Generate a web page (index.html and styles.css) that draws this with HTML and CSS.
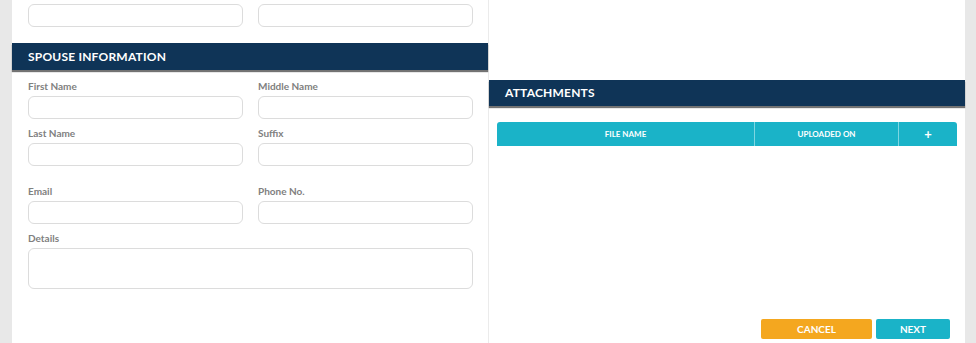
FILE: index.html
```html
<!DOCTYPE html>
<html lang="en">
<head>
    <meta charset="UTF-8">
    <meta name="viewport" content="width=device-width, initial-scale=1.0">
    <title>Spouse Information</title>
    <link rel="stylesheet" href="styles.css">
</head>
<body>
    <div class="page">
        <div class="left-col">
            <div class="form-row top-row">
                <div class="field"><input type="text"></div>
                <div class="field"><input type="text"></div>
            </div>

            <div class="section-header">Spouse Information</div>

            <div class="form-row row-1">
                <div class="field">
                    <label>First Name</label>
                    <input type="text">
                </div>
                <div class="field">
                    <label>Middle Name</label>
                    <input type="text">
                </div>
            </div>

            <div class="form-row row-2">
                <div class="field">
                    <label>Last Name</label>
                    <input type="text">
                </div>
                <div class="field">
                    <label>Suffix</label>
                    <input type="text">
                </div>
            </div>

            <div class="form-row row-3">
                <div class="field">
                    <label>Email</label>
                    <input type="email">
                </div>
                <div class="field">
                    <label>Phone No.</label>
                    <input type="text">
                </div>
            </div>

            <div class="form-row row-4">
                <div class="field wide">
                    <label>Details</label>
                    <textarea></textarea>
                </div>
            </div>
        </div>

        <div class="right-col">
            <div class="section-header attach-header">Attachments</div>

            <div class="attach-table">
                <div class="th th-name">File Name</div>
                <div class="th th-date">Uploaded On</div>
                <div class="th th-add">+</div>
            </div>

            <div class="actions">
                <button class="btn btn-cancel">Cancel</button>
                <button class="btn btn-next">Next</button>
            </div>
        </div>
    </div>
</body>
</html>
```

FILE: styles.css
```css
* {
    margin: 0;
    padding: 0;
    box-sizing: border-box;
}

body {
    font-family: Lato, 'Open Sans', sans-serif;
    background: #e8e8e8;
    height: 343px;
    overflow: hidden;
}

.page {
    display: flex;
    height: 343px;
    margin: 0 11px 0 12px;
    background: #ffffff;
}

/* Left column */
.left-col {
    width: 477px;
    border-right: 1px solid #ebebeb;
}

.form-row {
    display: grid;
    grid-template-columns: 215px 215px;
    column-gap: 15px;
    padding: 0 0 0 16px;
}

.top-row {
    padding-top: 4px;
}

.row-1 { margin-top: 9px; }
.row-2 { margin-top: 7px; }
.row-3 { margin-top: 18px; }
.row-4 { margin-top: 7px; }

.field {
    display: flex;
    flex-direction: column;
}

.field.wide {
    grid-column: 1 / span 2;
}

.field label {
    display: block;
    height: 14px;
    line-height: 14px;
    margin-bottom: 3px;
    font-size: 10px;
    font-weight: 700;
    color: #808080;
}

.field input,
.field textarea {
    width: 100%;
    height: 23px;
    border: 1px solid #dcdcdc;
    border-radius: 6px;
    background: #ffffff;
    outline: none;
    font-family: inherit;
}

.field textarea {
    height: 41px;
    resize: none;
}

.section-header {
    height: 27px;
    margin-top: 16px;
    padding-left: 16px;
    line-height: 27px;
    background: #0f3457;
    color: #ffffff;
    font-size: 12px;
    font-weight: 700;
    letter-spacing: 0.2px;
    text-transform: uppercase;
    box-shadow: 0 2px 1px rgba(0, 0, 0, 0.55);
}

/* Right column */
.right-col {
    flex: 1;
    display: flex;
    flex-direction: column;
    padding-bottom: 4px;
}

.attach-header {
    margin-top: 80px;
    height: 26px;
    line-height: 26px;
}

.attach-table {
    display: flex;
    height: 24px;
    margin: 16px 8px 0 8px;
    background: #1ab3c8;
    border-radius: 3px 3px 0 0;
}

.th {
    line-height: 24px;
    text-align: center;
    color: #ffffff;
    font-size: 8px;
    font-weight: 700;
    text-transform: uppercase;
}

.th-name {
    width: 258px;
    border-right: 1px solid #7fd6e1;
}

.th-date {
    width: 144px;
    border-right: 1px solid #7fd6e1;
}

.th-add {
    flex: 1;
    font-size: 13px;
}

.actions {
    margin-top: auto;
    display: flex;
    justify-content: flex-end;
    gap: 4px;
    padding-right: 15px;
}

.btn {
    height: 20px;
    border: none;
    border-radius: 2px;
    color: #ffffff;
    font-family: inherit;
    font-size: 10px;
    font-weight: 700;
    text-transform: uppercase;
    cursor: pointer;
}

.btn-cancel {
    width: 111px;
    background: #f4a71f;
}

.btn-next {
    width: 74px;
    background: #1ab3c8;
}
```
